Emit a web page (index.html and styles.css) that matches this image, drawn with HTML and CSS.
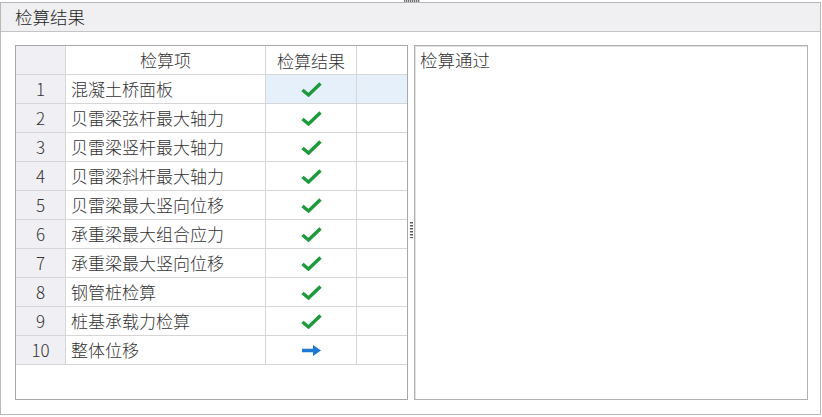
FILE: index.html
```html
<!DOCTYPE html>
<html lang="zh">
<head>
<meta charset="utf-8">
<link rel="stylesheet" href="styles.css">
</head>
<body>
<div class="topgrip"></div>
<div class="panel">
  <div class="title">检算结果</div>
  <div class="content">
    <div class="table">
      <div class="row head">
        <div class="c num"></div>
        <div class="c name center">检算项</div>
        <div class="c res">检算结果</div>
        <div class="c extra"></div>
      </div>
      <div class="row sel">
        <div class="c num">1</div><div class="c name">混凝土桥面板</div>
        <div class="c res"><svg class="ok" viewBox="0 0 21 15"><path d="M1.5 8 L7.5 13 L19.5 1.5"/></svg></div><div class="c extra"></div>
      </div>
      <div class="row">
        <div class="c num">2</div><div class="c name">贝雷梁弦杆最大轴力</div>
        <div class="c res"><svg class="ok" viewBox="0 0 21 15"><path d="M1.5 8 L7.5 13 L19.5 1.5"/></svg></div><div class="c extra"></div>
      </div>
      <div class="row">
        <div class="c num">3</div><div class="c name">贝雷梁竖杆最大轴力</div>
        <div class="c res"><svg class="ok" viewBox="0 0 21 15"><path d="M1.5 8 L7.5 13 L19.5 1.5"/></svg></div><div class="c extra"></div>
      </div>
      <div class="row">
        <div class="c num">4</div><div class="c name">贝雷梁斜杆最大轴力</div>
        <div class="c res"><svg class="ok" viewBox="0 0 21 15"><path d="M1.5 8 L7.5 13 L19.5 1.5"/></svg></div><div class="c extra"></div>
      </div>
      <div class="row">
        <div class="c num">5</div><div class="c name">贝雷梁最大竖向位移</div>
        <div class="c res"><svg class="ok" viewBox="0 0 21 15"><path d="M1.5 8 L7.5 13 L19.5 1.5"/></svg></div><div class="c extra"></div>
      </div>
      <div class="row">
        <div class="c num">6</div><div class="c name">承重梁最大组合应力</div>
        <div class="c res"><svg class="ok" viewBox="0 0 21 15"><path d="M1.5 8 L7.5 13 L19.5 1.5"/></svg></div><div class="c extra"></div>
      </div>
      <div class="row">
        <div class="c num">7</div><div class="c name">承重梁最大竖向位移</div>
        <div class="c res"><svg class="ok" viewBox="0 0 21 15"><path d="M1.5 8 L7.5 13 L19.5 1.5"/></svg></div><div class="c extra"></div>
      </div>
      <div class="row">
        <div class="c num">8</div><div class="c name">钢管桩检算</div>
        <div class="c res"><svg class="ok" viewBox="0 0 21 15"><path d="M1.5 8 L7.5 13 L19.5 1.5"/></svg></div><div class="c extra"></div>
      </div>
      <div class="row">
        <div class="c num">9</div><div class="c name">桩基承载力检算</div>
        <div class="c res"><svg class="ok" viewBox="0 0 21 15"><path d="M1.5 8 L7.5 13 L19.5 1.5"/></svg></div><div class="c extra"></div>
      </div>
      <div class="row">
        <div class="c num">10</div><div class="c name">整体位移</div>
        <div class="c res"><svg class="arrow" viewBox="0 0 19 11"><path d="M0 3.8 H11 V0 L19 5.5 L11 11 V7.2 H0 Z"/></svg></div><div class="c extra"></div>
      </div>
    </div>
    <div class="splitter"><div class="grip"></div></div>
    <div class="msg">检算通过</div>
  </div>
</div>
</body>
</html>
```

FILE: styles.css
```css
html, body {
  margin: 0;
  padding: 0;
  background: #ffffff;
}
body {
  font-family: "Noto Sans CJK SC", "Noto Sans", sans-serif;
  font-weight: 300;
  color: #333333;
  position: relative;
  width: 822px;
  height: 417px;
  overflow: hidden;
}
.topgrip {
  position: absolute;
  left: 404px;
  top: 0;
  width: 16px;
  height: 2px;
  background: repeating-linear-gradient(90deg, #707070 0 1px, #d0d0d0 1px 2px);
}
.panel {
  margin-top: 2px;
  width: 819px;
  height: 411px;
  border: 1px solid #b8b8b8;
  display: flex;
  flex-direction: column;
}
.title {
  height: 28px;
  background: #f0eff1;
  border-bottom: 1px solid #c4c4c4;
  font-size: 17.5px;
  line-height: 27px;
  padding-left: 14px;
  color: #1e1e1e;
}
.content {
  flex: 1;
  display: flex;
  padding: 13px 12px 14px 14px;
}
.table {
  width: 391px;
  border: 1px solid #a8a8a8;
  display: flex;
  flex-direction: column;
}
.row {
  display: grid;
  grid-template-columns: 50px 200px 91px 50px;
  height: 29px;
}
.c {
  border-right: 1px solid #d6d6d6;
  border-bottom: 1px solid #d6d6d6;
  font-size: 17px;
  line-height: 27px;
  box-sizing: border-box;
  white-space: nowrap;
  overflow: hidden;
}
.c.extra {
  border-right: none;
}
.num {
  background: #f0f0f4;
  text-align: center;
  color: #333333;
}
.name {
  padding-left: 5px;
}
.name.center {
  text-align: center;
  padding-left: 0;
}
.res {
  display: flex;
  align-items: center;
  justify-content: center;
  color: #333333;
}
.head .num {
  background: #f0f0f4;
}
.sel .res, .sel .extra {
  background: #e6f0fa;
}
.ok {
  width: 21px;
  height: 15px;
  margin-left: 1px;
}
.ok path {
  fill: none;
  stroke: #1c9a3c;
  stroke-width: 3.4;
  stroke-linecap: butt;
  stroke-linejoin: miter;
}
.arrow {
  width: 19px;
  height: 11px;
}
.arrow path {
  fill: #1e78d4;
}
.splitter {
  width: 6px;
  display: flex;
  align-items: center;
  justify-content: center;
}
.grip {
  width: 3px;
  height: 16px;
  margin-top: 14px;
  background: repeating-linear-gradient(180deg, #555555 0 1px, #b0b0b0 1px 2px, #ffffff 2px 3px);
}
.msg {
  border: 1px solid #b0b0b0;
  box-shadow: inset 1px 1px 0 #e2e2e2;
  font-size: 17.5px;
  line-height: 22px;
  padding: 3px 0 0 5px;
  box-sizing: border-box;
  width: 394px;
  color: #333333;
}
```
